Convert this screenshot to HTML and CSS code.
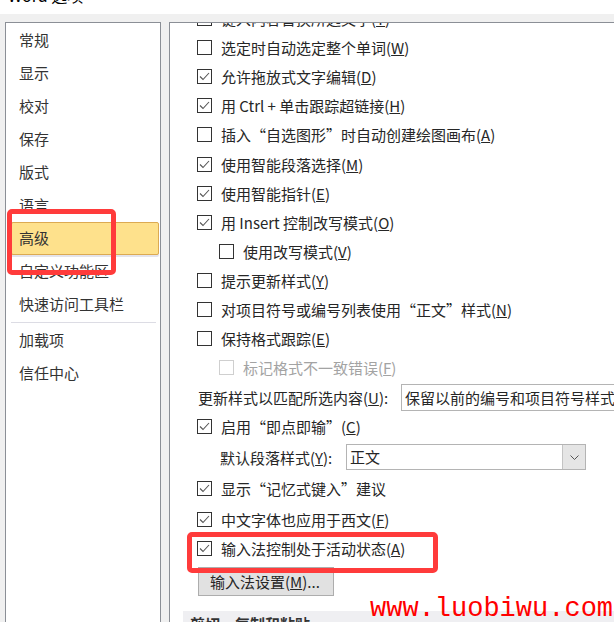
FILE: index.html
```html
<!DOCTYPE html>
<html lang="zh-CN">
<head>
<meta charset="utf-8">
<title>Word 选项</title>
<link rel="stylesheet" href="styles.css">
</head>
<body>
<div class="titlebar"><span class="title">Word 选项</span></div>
<div class="main">
  <nav class="nav">
    <div class="nav-item">常规</div>
    <div class="nav-item">显示</div>
    <div class="nav-item">校对</div>
    <div class="nav-item">保存</div>
    <div class="nav-item">版式</div>
    <div class="nav-item">语言</div>
    <div class="nav-item active">高级</div>
    <div class="nav-item">自定义功能区</div>
    <div class="nav-item">快速访问工具栏</div>
    <div class="nav-sep"></div>
    <div class="nav-item">加载项</div>
    <div class="nav-item">信任中心</div>
  </nav>
  <section class="panel">
    <div class="list">
      <div class="row"><span class="cb"><svg viewBox="0 0 13 13"><polyline points="2,6.5 5,9.5 11,3"/></svg></span><span>键入内容替换所选文字(<u>T</u>)</span></div>
      <div class="row"><span class="cb"></span><span>选定时自动选定整个单词(<u>W</u>)</span></div>
      <div class="row"><span class="cb"><svg viewBox="0 0 13 13"><polyline points="2,6.5 5,9.5 11,3"/></svg></span><span>允许拖放式文字编辑(<u>D</u>)</span></div>
      <div class="row"><span class="cb"><svg viewBox="0 0 13 13"><polyline points="2,6.5 5,9.5 11,3"/></svg></span><span>用 Ctrl + 单击跟踪超链接(<u>H</u>)</span></div>
      <div class="row"><span class="cb"></span><span>插入“自选图形”时自动创建绘图画布(<u>A</u>)</span></div>
      <div class="row"><span class="cb"><svg viewBox="0 0 13 13"><polyline points="2,6.5 5,9.5 11,3"/></svg></span><span>使用智能段落选择(<u>M</u>)</span></div>
      <div class="row"><span class="cb"><svg viewBox="0 0 13 13"><polyline points="2,6.5 5,9.5 11,3"/></svg></span><span>使用智能指针(<u>E</u>)</span></div>
      <div class="row"><span class="cb"><svg viewBox="0 0 13 13"><polyline points="2,6.5 5,9.5 11,3"/></svg></span><span>用 Insert 控制改写模式(<u>O</u>)</span></div>
      <div class="row ind"><span class="cb"></span><span>使用改写模式(<u>V</u>)</span></div>
      <div class="row"><span class="cb"></span><span>提示更新样式(<u>Y</u>)</span></div>
      <div class="row"><span class="cb"></span><span>对项目符号或编号列表使用“正文”样式(<u>N</u>)</span></div>
      <div class="row"><span class="cb"></span><span>保持格式跟踪(<u>E</u>)</span></div>
      <div class="row ind disabled"><span class="cb"></span><span>标记格式不一致错误(<u>F</u>)</span></div>
      <div class="row label field-row"><span class="field-label">更新样式以匹配所选内容(<u>U</u>):</span><span class="textbox">保留以前的编号和项目符号样式</span></div>
      <div class="row click-row"><span class="cb"><svg viewBox="0 0 13 13"><polyline points="2,6.5 5,9.5 11,3"/></svg></span><span>启用“即点即输”(<u>C</u>)</span></div>
      <div class="row label-ind combo-row"><span class="combo-label">默认段落样式(<u>Y</u>):</span><span class="combo"><span class="combo-text">正文</span><span class="combo-btn"><svg viewBox="0 0 9 5"><polyline points="0.5,0.5 4.5,4.5 8.5,0.5"/></svg></span></span></div>
      <div class="row auto-row"><span class="cb"><svg viewBox="0 0 13 13"><polyline points="2,6.5 5,9.5 11,3"/></svg></span><span>显示“记忆式键入”建议</span></div>
      <div class="row font-row"><span class="cb"><svg viewBox="0 0 13 13"><polyline points="2,6.5 5,9.5 11,3"/></svg></span><span>中文字体也应用于西文(<u>F</u>)</span></div>
      <div class="row"><span class="cb"><svg viewBox="0 0 13 13"><polyline points="2,6.5 5,9.5 11,3"/></svg></span><span>输入法控制处于活动状态(<u>A</u>)</span></div>
      <div class="btn-row"><span class="btn">输入法设置(<u>M</u>)...</span></div>
      <div class="section-head">剪切、复制和粘贴</div>
    </div>
  </section>
</div>
<div class="mark mark-nav"></div>
<div class="mark mark-ime"></div>
<div class="watermark">www.luobiwu.com</div>
</body>
</html>
```

FILE: styles.css
```css
html, body {
  margin: 0;
  padding: 0;
}

body {
  width: 614px;
  height: 622px;
  overflow: hidden;
  position: relative;
  background: #f0f0f0;
  font-family: "Noto Sans CJK SC", "Noto Sans", sans-serif;
  font-size: 15px;
  color: #262626;
}

.titlebar {
  height: 14px;
  background: #ffffff;
  overflow: hidden;
  padding-left: 8px;
}

.title {
  display: block;
  font-size: 16px;
  line-height: 16px;
  margin-top: -13px;
  color: #000;
}

.main {
  display: flex;
  gap: 8px;
  padding: 8px 0 0 5px;
  height: 600px;
}

.nav {
  flex: none;
  width: 154px;
  background: #fff;
  border: 1px solid #8b8f96;
  border-bottom: none;
  padding-top: 1px;
}

.nav-item {
  height: 33px;
  line-height: 31px;
  margin: 0 1px 0 5px;
  padding-left: 8px;
  color: #333;
  box-sizing: border-box;
  white-space: nowrap;
}

.nav-item.active {
  background: #fee18c;
  border: 1px solid #dcaa52;
  border-radius: 2px;
  padding-left: 7px;
  line-height: 29px;
  box-shadow: 0 2px 0 #e4e4ec;
}

.nav-sep {
  height: 1px;
  background: #dcdce4;
  margin: 1px 4px 1px 5px;
}

.panel {
  flex: 1;
  min-width: 0;
  background: #fff;
  border-left: 1px solid #8b8f96;
  border-top: 1px solid #8b8f96;
  overflow: hidden;
}

.list {
  margin-top: -19px;
}

.row {
  display: flex;
  align-items: center;
  height: 29.1px;
  padding-left: 27px;
  white-space: nowrap;
}

.row.ind {
  padding-left: 49px;
}

.row.label {
  padding-left: 28px;
}

.row.label-ind {
  padding-left: 50px;
}

.cb {
  flex: none;
  width: 15px;
  height: 15px;
  box-sizing: border-box;
  border: 1px solid #333;
  background: #fff;
  margin-right: 9px;
  display: flex;
}

.cb svg {
  width: 13px;
  height: 13px;
  fill: none;
  stroke: #555;
  stroke-width: 1.1;
}

.row.disabled {
  color: #a3a3a3;
}

.row.disabled .cb {
  border-color: #cfcfcf;
}

u {
  text-decoration: underline;
  text-underline-offset: 1px;
}

.field-row {
  height: 31px;
}

.field-label {
  flex: none;
  width: 203px;
}

.textbox {
  flex: none;
  width: 260px;
  height: 27px;
  line-height: 25px;
  box-sizing: border-box;
  border: 1px solid #b4b4b4;
  padding-left: 3px;
  overflow: hidden;
}

.click-row {
  height: 27px;
}

.combo-row {
  height: 34px;
}

.combo-label {
  flex: none;
  width: 126px;
}

.combo {
  flex: none;
  display: flex;
  width: 240px;
  height: 26px;
  box-sizing: border-box;
  border: 1px solid #b4b4b4;
}

.combo-text {
  flex: 1;
  line-height: 24px;
  padding-left: 3px;
}

.combo-btn {
  flex: none;
  width: 22px;
  background: #e5e5e5;
  border-left: 1px solid #c4c4c4;
  display: flex;
  align-items: center;
  justify-content: center;
}

.combo-btn svg {
  width: 9px;
  height: 5px;
  fill: none;
  stroke: #555;
  stroke-width: 1;
}

.auto-row {
  height: 28px;
}

.font-row {
  margin-top: 3px;
}

.btn-row {
  margin-top: 4px;
  padding-left: 28px;
}

.btn {
  display: block;
  width: 136px;
  height: 29px;
  line-height: 27px;
  box-sizing: border-box;
  border: 1px solid #adadad;
  background: #e1e1e1;
  padding-left: 11px;
  white-space: nowrap;
}

.section-head {
  margin: 15px 0 0 13px;
  height: 26px;
  line-height: 26px;
  background: #efeff2;
  padding-left: 7px;
  font-weight: bold;
  color: #333;
}

.mark {
  position: absolute;
  box-sizing: border-box;
  border: 5px solid #ff3b3b;
  border-radius: 5px;
}

.mark-nav {
  left: 7px;
  top: 209px;
  width: 109px;
  height: 66px;
}

.mark-ime {
  left: 187px;
  top: 532px;
  width: 251px;
  height: 41px;
}

.watermark {
  position: absolute;
  left: 370px;
  top: 596px;
  font-family: "Liberation Mono", monospace;
  font-size: 27px;
  line-height: 27px;
  color: #ff0000;
  white-space: nowrap;
}
```
